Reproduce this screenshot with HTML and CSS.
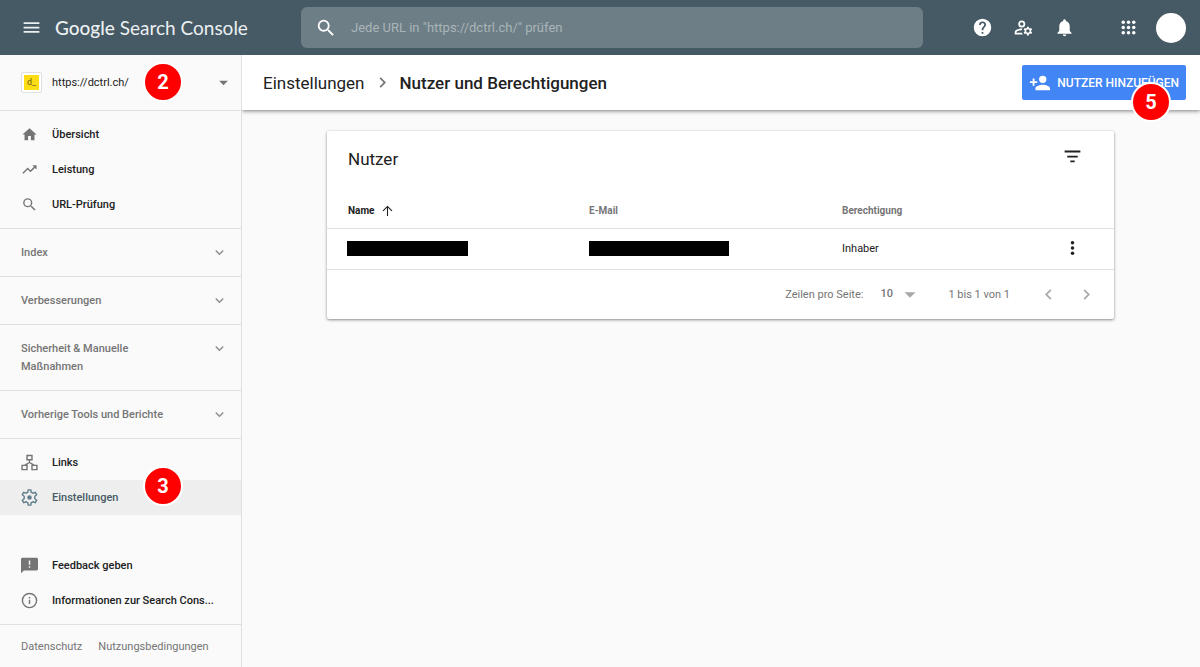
FILE: index.html
```html
<!DOCTYPE html>
<html lang="de">
<head>
<meta charset="utf-8">
<title>Google Search Console – Nutzer und Berechtigungen</title>
<meta name="viewport" content="width=device-width, initial-scale=1">
<link rel="stylesheet" href="styles.css">
</head>
<body>
<header class="topbar">
  <div class="topbar-start">
    <button class="icon-button" type="button" aria-label="Menü">
      <svg class="icon icon-l" viewBox="0 0 24 24"><path d="M3 18h18v-2H3v2zm0-5h18v-2H3v2zm0-7v2h18V6H3z"/></svg>
    </button>
    <a class="logo" href="#"><span class="logo-brand">Google</span> <span class="logo-product">Search Console</span></a>
  </div>
  <form class="search">
    <svg class="icon icon-xl" viewBox="0 0 24 24"><path d="M15.5 14h-.79l-.28-.27A6.47 6.47 0 0 0 16 9.5 6.5 6.5 0 1 0 9.5 16c1.61 0 3.09-.59 4.23-1.57l.27.28v.79l5 4.99L20.49 19l-4.99-5zm-6 0a4.5 4.5 0 1 1 0-9 4.5 4.5 0 0 1 0 9z"/></svg>
    <input class="search-input" type="text" aria-label="URL prüfen" placeholder="Jede URL in &quot;https://dctrl.ch/&quot; prüfen">
  </form>
  <div class="topbar-actions">
    <button class="icon-button" type="button" aria-label="Hilfe">
      <svg class="icon icon-l" viewBox="0 0 24 24"><path d="M12 2a10 10 0 1 0 0 20 10 10 0 0 0 0-20zm1 17h-2v-2h2v2zm2.07-7.75-.9.92C13.45 12.9 13 13.5 13 15h-2v-.5c0-1.1.45-2.1 1.17-2.83l1.24-1.26A2 2 0 1 0 10 9H8a4 4 0 1 1 8 0c0 .88-.36 1.68-.93 2.25z"/></svg>
    </button>
    <button class="icon-button" type="button" aria-label="Nutzereinstellungen">
      <svg class="icon icon-l" viewBox="0 0 24 24"><path d="M4 18v-.65c0-.34.16-.66.41-.81A10.9 10.9 0 0 1 10 15h.1c.13-.7.36-1.37.67-1.99-.25-.02-.51-.01-.77-.01-2.42 0-4.68.67-6.61 1.82C2.51 15.34 2 16.32 2 17.35V20h9.26c-.42-.6-.75-1.28-.97-2H4zM10 12a4 4 0 1 0 0-8 4 4 0 0 0 0 8zm0-6a2 2 0 1 1 0 4 2 2 0 0 1 0-4zM20.75 16c0-.22-.03-.42-.06-.63l1.14-1.01-1-1.73-1.45.49c-.32-.27-.68-.48-1.08-.63L18 11h-2l-.3 1.49c-.4.15-.76.36-1.08.63l-1.45-.49-1 1.73 1.14 1.01a3.8 3.8 0 0 0 0 1.26l-1.14 1.01 1 1.73 1.45-.49c.32.27.68.48 1.08.63L16 21h2l.3-1.49c.4-.15.76-.36 1.08-.63l1.45.49 1-1.73-1.14-1.01c.03-.21.06-.41.06-.63zM17 18a2 2 0 1 1 0-4 2 2 0 0 1 0 4z"/></svg>
    </button>
    <button class="icon-button" type="button" aria-label="Benachrichtigungen">
      <svg class="icon icon-l" viewBox="0 0 24 24"><path d="M12 22c1.1 0 2-.9 2-2h-4a2 2 0 0 0 2 2zm6-6v-5c0-3.07-1.64-5.64-4.5-6.32V4a1.5 1.5 0 0 0-3 0v.68C7.63 5.36 6 7.92 6 11v5l-2 2v1h16v-1l-2-2z"/></svg>
    </button>
    <button class="icon-button apps" type="button" aria-label="Google Apps">
      <svg class="icon icon-l" viewBox="0 0 24 24"><circle cx="6" cy="6" r="2"/><circle cx="12" cy="6" r="2"/><circle cx="18" cy="6" r="2"/><circle cx="6" cy="12" r="2"/><circle cx="12" cy="12" r="2"/><circle cx="18" cy="12" r="2"/><circle cx="6" cy="18" r="2"/><circle cx="12" cy="18" r="2"/><circle cx="18" cy="18" r="2"/></svg>
    </button>
    <button class="avatar" type="button" aria-label="Konto"></button>
  </div>
</header>

<div class="layout">
  <nav class="sidebar">
    <button class="property" type="button">
      <span class="favicon"><span class="favicon-mark">d_</span></span>
      <span class="property-name">https://dctrl.ch/</span>
      <svg class="icon icon-l muted" viewBox="0 0 24 24"><path d="M7 10l5 5 5-5z"/></svg>
      <span class="step step-side">2</span>
    </button>

    <div class="nav-group">
      <a class="nav-item" href="#"><svg class="icon" viewBox="0 0 24 24"><path d="M10 20v-6h4v6h5v-8h3L12 3 2 12h3v8z"/></svg><span class="nav-label">Übersicht</span></a>
      <a class="nav-item" href="#"><svg class="icon" viewBox="0 0 24 24"><path d="M16 6l2.29 2.29-4.88 4.88-4-4L2 16.59 3.41 18l6-6 4 4 6.3-6.29L22 12V6z"/></svg><span class="nav-label">Leistung</span></a>
      <a class="nav-item" href="#"><svg class="icon" viewBox="0 0 24 24"><path d="M15.5 14h-.79l-.28-.27A6.47 6.47 0 0 0 16 9.5 6.5 6.5 0 1 0 9.5 16c1.61 0 3.09-.59 4.23-1.57l.27.28v.79l5 4.99L20.49 19l-4.99-5zm-6 0a4.5 4.5 0 1 1 0-9 4.5 4.5 0 0 1 0 9z"/></svg><span class="nav-label">URL-Prüfung</span></a>
    </div>

    <button class="nav-section" type="button"><span class="section-label">Index</span><svg class="icon chevron" viewBox="0 0 24 24"><path d="M7.41 8.59 12 13.17l4.59-4.58L18 10l-6 6-6-6z"/></svg></button>
    <button class="nav-section" type="button"><span class="section-label">Verbesserungen</span><svg class="icon chevron" viewBox="0 0 24 24"><path d="M7.41 8.59 12 13.17l4.59-4.58L18 10l-6 6-6-6z"/></svg></button>
    <button class="nav-section" type="button"><span class="section-label">Sicherheit &amp; Manuelle Maßnahmen</span><svg class="icon chevron" viewBox="0 0 24 24"><path d="M7.41 8.59 12 13.17l4.59-4.58L18 10l-6 6-6-6z"/></svg></button>
    <button class="nav-section" type="button"><span class="section-label">Vorherige Tools und Berichte</span><svg class="icon chevron" viewBox="0 0 24 24"><path d="M7.41 8.59 12 13.17l4.59-4.58L18 10l-6 6-6-6z"/></svg></button>

    <div class="nav-group nav-group-plain">
      <a class="nav-item" href="#"><svg class="icon outline" viewBox="0 0 24 24"><path d="M8.500 2h7v6h-7zM1.500 16h7v6h-7zM15.500 16h7v6h-7zM12 8v4M5 16l7-4 7 4"/></svg><span class="nav-label">Links</span></a>
      <a class="nav-item active" href="#" aria-current="page"><svg class="icon outline" viewBox="0 0 24 24"><path d="M9.600 4.500 10.200 1.200h3.600l.6 3.300 2.600 1.500 3.200-1.200 1.900 3.200-2.600 2.200v3.600l2.600 2.200-1.900 3.200-3.200-1.200-2.600 1.500-.6 3.300h-3.600l-.6-3.300L7 18l-3.200 1.200L1.900 16l2.600-2.200v-3.600L1.900 8l1.900-3.200L7 6z"/><circle cx="12" cy="12" r="2.200" fill="currentColor"/></svg><span class="nav-label">Einstellungen</span><span class="step step-side step-raised">3</span></a>
    </div>

    <div class="nav-group nav-bottom">
      <a class="nav-item" href="#"><svg class="icon" viewBox="0 0 24 24"><path d="M22 1H2C1 1 0 2 0 3v20l4-4h18c1 0 2-1 2-2V3c0-1-1-2-2-2zm-9 14h-2v-2h2v2zm0-4h-2V5h2v6z"/></svg><span class="nav-label">Feedback geben</span></a>
      <a class="nav-item" href="#"><svg class="icon" viewBox="0 0 24 24"><path d="M11 17h2v-6h-2v6zm1-16a11 11 0 1 0 0 22 11 11 0 0 0 0-22zm0 20a9 9 0 1 1 0-18 9 9 0 0 1 0 18zM11 9h2V7h-2v2z"/></svg><span class="nav-label">Informationen zur Search Cons...</span></a>
    </div>

    <div class="legal">
      <a href="#">Datenschutz</a>
      <a href="#">Nutzungsbedingungen</a>
    </div>
  </nav>

  <main class="main">
    <div class="page-header">
      <div class="breadcrumb">
        <a class="crumb" href="#">Einstellungen</a>
        <svg class="icon icon-l muted" viewBox="0 0 24 24"><path d="M10 6 8.590 7.410 13.170 12l-4.580 4.590L10 18l6-6z"/></svg>
        <h1 class="page-title">Nutzer und Berechtigungen</h1>
      </div>
      <button class="add-user" type="button">
        <svg class="icon icon-xl" viewBox="0 0 24 24"><path d="M15 12a4 4 0 1 0 0-8 4 4 0 0 0 0 8zm-9-2V7H4v3H1v2h3v3h2v-3h3v-2H6zm9 4c-2.670 0-8 1.340-8 4v2h16v-2c0-2.660-5.330-4-8-4z"/></svg>
        <span>NUTZER HINZUFÜGEN</span>
        <span class="step step-corner">5</span>
      </button>
    </div>

    <div class="content">
      <section class="card">
        <div class="card-header">
          <h2 class="card-title">Nutzer</h2>
          <button class="icon-button cell-button" type="button" aria-label="Filter">
            <svg class="icon icon-l" viewBox="0 0 24 24"><path d="M9.500 18.500h5v-2h-5v2zM3 5v2.300h18V5H3zM6 13h12v-2H6v2z"/></svg>
          </button>
        </div>
        <table class="users">
          <thead>
            <tr>
              <th class="col-name" scope="col"><span class="sorted">Name <svg class="icon icon-s" viewBox="0 0 24 24"><path d="M3 12l1.500 1.500 6.500-6.500V22h2V7l6.500 6.500L21 12l-9-9z"/></svg></span></th>
              <th class="col-mail" scope="col">E-Mail</th>
              <th scope="col">Berechtigung</th>
              <th class="col-menu"></th>
            </tr>
          </thead>
          <tbody>
            <tr>
              <td class="name-cell"><div class="redacted redacted-name"></div></td>
              <td><div class="redacted redacted-mail"></div></td>
              <td>Inhaber</td>
              <td class="menu-cell">
                <button class="icon-button" type="button" aria-label="Weitere Aktionen">
                  <svg class="icon icon-l" viewBox="0 0 24 24"><circle cx="12" cy="5.500" r="2"/><circle cx="12" cy="11.500" r="2"/><circle cx="12" cy="17.500" r="2"/></svg>
                </button>
              </td>
            </tr>
          </tbody>
        </table>
        <div class="pager">
          <label for="rows">Zeilen pro Seite:</label>
          <div class="rows-field">
            <select class="rows-select" id="rows"><option>10</option><option>25</option></select>
            <svg class="icon icon-xl rows-arrow" viewBox="0 0 24 24"><path d="M6 9l6 6 6-6z"/></svg>
          </div>
          <span class="range">1 bis 1 von 1</span>
          <button class="icon-button page-button" type="button" aria-label="Vorherige Seite"><svg class="icon icon-l" viewBox="0 0 24 24"><path d="M15.410 7.410 14 6l-6 6 6 6 1.410-1.410L10.830 12z"/></svg></button>
          <button class="icon-button page-button" type="button" aria-label="Nächste Seite"><svg class="icon icon-l" viewBox="0 0 24 24"><path d="M10 6 8.590 7.410 13.170 12l-4.580 4.590L10 18l6-6z"/></svg></button>
        </div>
      </section>
    </div>
  </main>
</div>
</body>
</html>
```
FILE: styles.css
```css
* {
  box-sizing: border-box;
}

body {
  margin: 0;
  min-height: 100vh;
  display: flex;
  flex-direction: column;
  background: #fafafa;
  color: #212121;
  font-family: Roboto, "Liberation Sans", sans-serif;
  font-size: 11px;
}

a {
  color: inherit;
  text-decoration: none;
}

button {
  border: 0;
  padding: 0;
  background: none;
  color: inherit;
  font: inherit;
  text-align: left;
  cursor: pointer;
}

.icon {
  display: block;
  flex: none;
  width: 17px;
  height: 17px;
  fill: currentColor;
}

.icon-s { width: 13px; height: 13px; }
.icon-l { width: 21px; height: 21px; }
.icon-xl { width: 22px; height: 22px; }

.outline {
  fill: none;
  stroke: currentColor;
  stroke-width: 2;
}

.muted { color: #757575; }

.icon-button {
  display: grid;
  place-items: center;
}

/* Top bar */
.topbar {
  display: flex;
  align-items: center;
  height: 55px;
  padding: 0 14px 0 21px;
  background: #455a64;
  color: #fff;
}

.topbar-start {
  display: flex;
  align-items: center;
  gap: 13px;
  width: 280px;
  color: #eceff1;
}

.logo {
  font-family: Lato, sans-serif;
  font-size: 19px;
  line-height: 24px;
  white-space: nowrap;
}

.logo-brand { font-weight: 500; }
.logo-product { font-weight: 400; }

.search {
  display: flex;
  flex: 1;
  align-items: center;
  gap: 14px;
  height: 41px;
  padding: 0 14px;
  border-radius: 6px;
  background: #6d7e86;
}

.search-input {
  flex: 1;
  min-width: 0;
  padding: 0;
  border: 0;
  outline: 0;
  background: none;
  color: #fff;
  font: 13px/20px Roboto, "Liberation Sans", sans-serif;
}

.search-input::placeholder {
  color: #aab4b8;
  opacity: 1;
}

.topbar-actions {
  display: flex;
  align-items: center;
  gap: 20px;
  padding-left: 49px;
}

.apps { margin-left: 23px; }

.avatar {
  width: 30px;
  height: 30px;
  margin-left: -3px;
  border-radius: 50%;
  background: #fff;
}

/* Layout */
.layout {
  display: flex;
  flex: 1;
}

.sidebar {
  display: flex;
  flex: none;
  flex-direction: column;
  width: 242px;
  border-right: 1px solid #e0e0e0;
}

.main {
  flex: 1;
  min-width: 0;
}

/* Sidebar */
.property {
  position: relative;
  display: flex;
  align-items: center;
  gap: 10px;
  height: 56px;
  padding: 0 7px 0 21px;
  border-bottom: 1px solid #e0e0e0;
}

.favicon {
  display: grid;
  place-items: center;
  width: 21px;
  height: 21px;
  border: 1px solid #e0e0e0;
  border-radius: 2px;
  background: #fff;
}

.favicon-mark {
  width: 15px;
  height: 15px;
  background: #ffdd14;
  color: #8a7a1c;
  font-size: 9px;
  font-weight: 500;
  line-height: 14px;
  text-align: center;
}

.property-name {
  flex: 1;
}

.nav-group {
  padding: 6px 0;
  border-bottom: 1px solid #e0e0e0;
}

.nav-group-plain { border-bottom: 0; }
.nav-bottom { margin-top: auto; }

.nav-item {
  position: relative;
  display: flex;
  align-items: center;
  gap: 14px;
  height: 35px;
  padding: 0 20px 0 21px;
  font-weight: 500;
}

.nav-item .icon { color: #757575; }

.nav-label {
  white-space: nowrap;
}

.nav-item.active {
  background: #eee;
  color: #455a64;
}

.nav-item.active .icon { color: #607d8b; }

.nav-section {
  display: flex;
  align-items: flex-start;
  justify-content: space-between;
  padding: 15px 13px 14px 21px;
  border-bottom: 1px solid #e0e0e0;
  color: #757575;
  font-weight: 500;
  line-height: 18px;
}

.section-label { max-width: 150px; }

.chevron { color: #8e8e8e; }

.legal {
  display: flex;
  align-items: center;
  gap: 16px;
  height: 42px;
  padding: 0 21px;
  color: #757575;
}

/* Numbered step markers */
.step {
  position: absolute;
  display: grid;
  place-items: center;
  width: 40px;
  height: 40px;
  border: 2px solid #fff;
  border-radius: 50%;
  background: #f00;
  color: #fff;
  font-family: "Liberation Sans Narrow", Roboto, sans-serif;
  font-size: 20px;
  font-weight: 700;
  line-height: 20px;
}

.step-side { left: 143px; top: 7px; }
.step-raised { top: -14px; }
.step-corner { right: 15px; top: 17px; }

/* Page header */
.page-header {
  position: relative;
  display: flex;
  align-items: center;
  justify-content: space-between;
  height: 55px;
  padding: 0 14px 0 21px;
  background: #fff;
  box-shadow: 0 1px 4px rgba(0, 0, 0, 0.5);
  clip-path: inset(0 0 -30px 0);
}

.breadcrumb {
  display: flex;
  align-items: center;
  gap: 7px;
  font-size: 17px;
}

.page-title {
  margin: 0;
  font-size: 17px;
  font-weight: 500;
}

.add-user {
  position: relative;
  display: flex;
  align-items: center;
  gap: 6px;
  height: 35px;
  padding: 0 7px;
  border-radius: 2px;
  background: #4285f4;
  color: #fff;
  font-size: 12px;
  font-weight: 500;
}

/* Card */
.content { padding: 21px 86px 21px 85px; }

.card {
  border-radius: 2px;
  background: #fff;
  box-shadow: 0 1px 3px rgba(0, 0, 0, 0.45);
}

.card-header {
  display: flex;
  align-items: center;
  justify-content: space-between;
  height: 56px;
  padding-left: 21px;
}

.card-title {
  margin: 0;
  font-size: 17px;
  font-weight: 400;
}

.cell-button {
  width: 83px;
  height: 50px;
  align-self: flex-start;
}

.users {
  width: 100%;
  border-collapse: collapse;
  table-layout: fixed;
}

.users th {
  height: 41px;
  padding: 7px 0 0;
  border-bottom: 1px solid #e0e0e0;
  color: #757575;
  font-size: 10px;
  font-weight: 700;
  text-align: left;
}

.users td {
  height: 41px;
  padding: 0;
  border-bottom: 1px solid #e0e0e0;
}

.users .col-name {
  width: 262px;
  padding-left: 21px;
  color: #212121;
}

.col-mail { width: 253px; }
.users .col-menu { width: 83px; }

.sorted {
  display: flex;
  align-items: center;
  gap: 7px;
}

.users .name-cell { padding-left: 20px; }

.redacted {
  height: 15px;
  background: #000;
}

.redacted-name { width: 121px; }
.redacted-mail { width: 140px; }

.menu-cell .icon-button {
  width: 100%;
}

.pager {
  display: flex;
  align-items: center;
  justify-content: flex-end;
  height: 49px;
  padding-right: 17px;
  color: #757575;
}

.rows-field {
  position: relative;
  margin: 0 27px 0 17px;
}

.rows-select {
  width: 41px;
  padding: 0;
  border: 0;
  appearance: none;
  background: none;
  color: #757575;
  font: 500 11px/20px Roboto, "Liberation Sans", sans-serif;
}

.rows-arrow {
  position: absolute;
  right: 0;
  top: 0;
  color: #a8a8a8;
  pointer-events: none;
}

.range { margin-right: 28px; }

.page-button { color: #a8a8a8; }
.page-button + .page-button { margin-left: 17px; }
```
